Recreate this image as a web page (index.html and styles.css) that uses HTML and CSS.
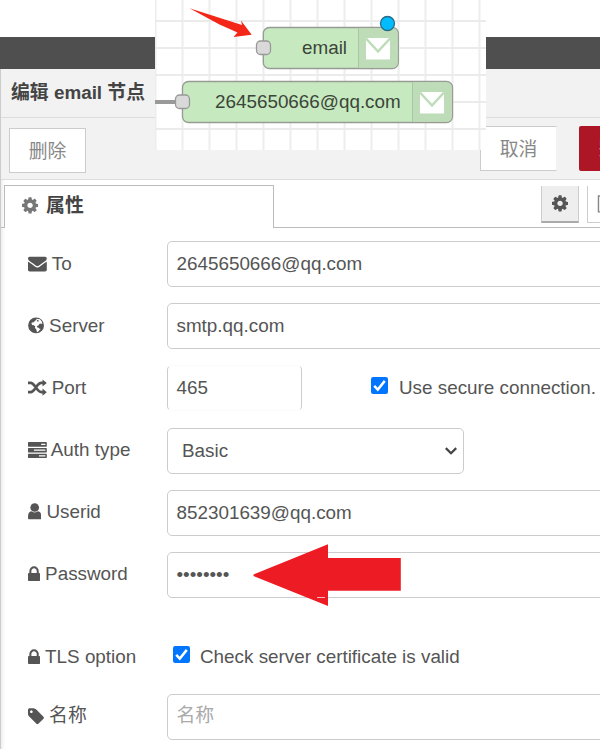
FILE: index.html
```html
<!DOCTYPE html>
<html lang="zh-CN">
<head>
<meta charset="utf-8">
<title>编辑 email 节点</title>
<link rel="stylesheet" href="styles.css">
</head>
<body>
<svg class="defs" width="0" height="0">
  <symbol id="cog" viewBox="0 0 1536 1792"><path d="M1024 896q0-106-75-181t-181-75-181 75-75 181 75 181 181 75 181-75 75-181zm512-109v222q0 12-8 23t-20 13l-185 28q-19 54-39 91 35 50 107 138 10 12 10 25t-9 23q-27 37-99 108t-94 71q-12 0-26-9l-138-108q-44 23-91 38-16 136-29 186-7 28-36 28h-222q-14 0-24.5-8.5t-11.5-21.5l-28-184q-49-16-90-37l-141 107q-10 9-25 9-14 0-25-11-126-114-165-168-7-10-7-23 0-12 8-23 15-21 51-66.5t54-70.5q-27-50-41-99l-183-27q-13-2-21-12.5t-8-23.5v-222q0-12 8-23t19-13l186-28q14-46 39-92-40-57-107-138-10-12-10-24 0-10 9-23 26-36 98.5-107.5t94.5-71.5q13 0 26 10l138 107q44-23 91-38 16-136 29-186 7-28 36-28h222q14 0 24.5 8.5t11.5 21.5l28 184q49 16 90 37l142-107q9-9 24-9 13 0 25 10 129 119 165 170 7 8 7 22 0 12-8 23-15 21-51 66.5t-54 70.5q26 50 41 98l183 28q13 2 21 12.5t8 23.5z"/></symbol>
  <symbol id="lock" viewBox="0 0 1152 1792"><path d="M320 768h512v-192q0-106-75-181t-181-75-181 75-75 181v192zm832 96v576q0 40-28 68t-68 28h-960q-40 0-68-28t-28-68v-576q0-40 28-68t68-28h32v-192q0-184 132-316t316-132 316 132 132 316v192h32q40 0 68 28t28 68z"/></symbol>
  <symbol id="check" viewBox="0 0 17 17"><rect width="17" height="17" rx="2.2" fill="#0075ff"/><path d="M3.2 8.8l3.6 3.7 7-8.6" fill="none" stroke="#fff" stroke-width="2.5"/></symbol>
</svg>

<div class="editor">
  <div class="topbar"></div>
  <div class="tray">
    <header class="tray-header">编辑 email 节点</header>
    <div class="toolbar">
      <div class="btn delete">删除</div>
      <div class="btn cancel">取消</div>
      <div class="btn done">完成</div>
    </div>
    <div class="tabs">
      <div class="tab"><svg class="icon w16"><use href="#cog"/></svg>属性</div>
      <div class="tab-tools">
        <div class="tool active"><svg class="icon w16"><use href="#cog"/></svg></div>
        <div class="tool doc"><svg class="icon w16" viewBox="0 0 16 20"><path d="M1 1h14v17H1zM4 7h8M4 11h8" fill="none" stroke="#888" stroke-width="1.5"/></svg></div>
      </div>
    </div>
    <div class="form">
      <div class="row">
        <div class="label"><svg class="icon w19" viewBox="0 0 1792 1792"><path d="M1792 710v794q0 66-47 113t-113 47h-1472q-66 0-113-47t-47-113v-794q44 49 101 87 362 246 497 345 57 42 92.5 65.5t94.5 48 110 24.5h2q51 0 110-24.5t94.5-48 92.5-65.5q170-123 498-345 57-39 100-87zm0-294q0 79-49 151t-122 123q-376 261-468 325-10 7-42.5 31t-54 38.5-52 32.5-57.5 27-50 9h-2q-23 0-50-9t-57.5-27-52-32.5-54-38.5-42.5-31q-91-64-262-182.5t-205-142.5q-62-42-117-115.5t-55-136.5q0-78 41.5-130t118.5-52h1472q65 0 112.5 47t47.5 113z"/></svg>To</div>
        <div class="field wide">2645650666@qq.com</div>
      </div>
      <div class="row">
        <div class="label"><svg class="icon w16" viewBox="0 0 16 19"><circle cx="8" cy="9.5" r="8"/><path d="M8.600 2.900l3.300.4 2.100 2.600.300 2.300-1.300-.5-1.700.5-.8 1.300-1.600.7.400 1.500 1.800.2 1.400 1.200-1.900 2.400-1.700.8-.5-2.500-1.600-1.800.5-1.500-1.500-1.100-1.600-.3-.9-1.200.6-1.400 1.800-.3 1.200-1.500 1.200-.5z" fill="#fff"/><path d="M9.400 3.800l1.400.7-.5 1.200-1.500-.4zM10 10.200l3.800-.5.400 2-3 1.200z"/></svg>Server</div>
        <div class="field wide">smtp.qq.com</div>
      </div>
      <div class="row">
        <div class="label"><svg class="icon w19" viewBox="0 0 19 19"><path d="M0 5h2.6c4.5 0 6 9.300 11 9.300h2M0 14.300h2.600c4.500 0 6-9.300 11-9.300h2" fill="none" stroke="#555" stroke-width="2.700"/><path d="M14.700 1.400L19 5l-4.300 3.600zM14.700 10.700l4.300 3.600-4.300 3.600z"/></svg>Port</div>
        <div class="field port">465</div>
        <div class="option secure"><svg class="checkbox"><use href="#check"/></svg><span>Use secure connection.</span></div>
      </div>
      <div class="row">
        <div class="label auth"><svg class="icon w19" viewBox="0 0 19 19"><path d="M.5 .9h18q.5 0 .5.5v3.900q0 .5-.5.5H.5q-.5 0-.5-.5V1.400q0-.5.5-.5zM.5 7h18q.5 0 .5.5v3.500q0 .5-.5.5H.5q-.5 0-.5-.5V7.500q0-.5.5-.5zM.5 12.800h18q.5 0 .5.5v3.400q0 .5-.5.5H.5q-.5 0-.5-.5v-3.400q0-.5.5-.5z"/><path d="M13.300 2.700h4.200v1.400h-4.200zM6 8.600h11.500v1.300H6zM11 14.300h6.500v1.300H11z" fill="#fff"/></svg>Auth type</div>
        <div class="field select">Basic<svg class="chevron" viewBox="0 0 12 8"><path d="M.8 1.100l5.200 5.200 5.200-5.200" fill="none" stroke="#444" stroke-width="2.200"/></svg></div>
      </div>
      <div class="row">
        <div class="label"><svg class="icon w13" viewBox="0 0 1280 1792"><path d="M1280 1360q0 100-20 150t-80 50H100q-60 0-80-50T0 1360q0-85 8.500-160.500t31.500-152 58.500-131 94-89 134.500-34.500q131 110 313 110t313-110q76 0 134.500 34.500t94 89 58.500 131 31.500 152 8.500 160.500z"/><circle cx="640" cy="430" r="415"/></svg>Userid</div>
        <div class="field wide">852301639@qq.com</div>
      </div>
      <div class="row">
        <div class="label"><svg class="icon w12"><use href="#lock"/></svg>Password</div>
        <div class="field wide">••••••••</div>
      </div>
      <div class="row tls">
        <div class="label"><svg class="icon w12"><use href="#lock"/></svg>TLS option</div>
        <div class="option"><svg class="checkbox"><use href="#check"/></svg><span>Check server certificate is valid</span></div>
      </div>
      <div class="row">
        <div class="label"><svg class="icon w16" viewBox="0 0 1536 1792"><path d="M448 448q0-53-37.500-90.500t-90.500-37.500-90.500 37.500-37.500 90.500 37.500 90.500 90.500 37.500 90.500-37.500 37.500-90.500zm1067 576q0 53-37 90l-491 492q-39 37-91 37-53 0-90-37l-715-716q-38-37-64.500-101t-26.500-117v-416q0-52 38-90t90-38h416q53 0 117 26.500t102 64.500l715 714q37 39 37 91z"/></svg>名称</div>
        <div class="field wide placeholder">名称</div>
      </div>
    </div>
  </div>

  <svg class="flow" width="331" height="150" viewBox="155 0 331 150">
    <defs>
      <pattern id="grid" x="154.500" y="20" width="27" height="27" patternUnits="userSpaceOnUse"><path d="M0 1h27M1 0v27" stroke="#ebebeb" stroke-width="1.800"/></pattern>
    </defs>
    <rect x="155" width="331" height="150" fill="#fff"/>
    <rect x="155" width="331" height="150" fill="url(#grid)"/>
    <path d="M155 102h27" stroke="#999" stroke-width="4"/>
    <g stroke="#969c94" stroke-width="1.300">
      <rect x="263.300" y="27.500" width="135" height="41" rx="6" fill="#c7e9c0"/>
      <rect x="182.500" y="81.500" width="270" height="41" rx="6" fill="#c7e9c0"/>
    </g>
    <g fill="#bddcb7">
      <path d="M358.500 28.200h33.300q5.800 0 5.800 5.800v28q0 5.800-5.800 5.800h-33.300z"/>
      <path d="M412.500 82.200h33.300q5.800 0 5.800 5.800v28q0 5.800-5.800 5.800h-33.300z"/>
    </g>
    <path d="M358.500 28v40M412.500 82v40" stroke="#a9c6a4"/>
    <g id="mail"><path d="M366 38h24v21.500h-24z" fill="#fff"/><path d="M366 38.500l12 13L390 38.500" fill="none" stroke="#bddcb7" stroke-width="2.500"/></g>
    <use href="#mail" x="54" y="54"/>
    <g fill="#d9d9d9" stroke="#999" stroke-width="1.300">
      <rect x="256.500" y="41" width="14" height="13.500" rx="4"/>
      <rect x="175.500" y="95" width="14" height="13.500" rx="4"/>
    </g>
    <circle cx="387.500" cy="23.500" r="7" fill="#00bcff" stroke="#286b86" stroke-width="1.300"/>
    <text x="302" y="54">email</text>
    <text x="215" y="108">2645650666@qq.com</text>
    <path d="M189.500 8.300L242 25l-1-4.500 10.700 14.200-18.200 2.300 4-4.500-18-8z" fill="#f42618"/>
  </svg>

  <svg class="pointer" width="149" height="64" viewBox="253 543 149 64"><path d="M253.500 574.500L328 544.200V558h72.800v32.800H328V606L253.500 576z" fill="#ed1c24"/><path d="M317 597.500h8" stroke="#f6b9bb"/></svg>
</div>
</body>
</html>
```
FILE: styles.css
```css
* { box-sizing: border-box; }

body {
  margin: 0;
  background: #fff;
  color: #555;
  font: 18.85px/24px "Liberation Sans", "Noto Sans CJK SC", sans-serif;
}

.defs { position: absolute; }

.editor {
  position: relative;
  width: 600px;
  height: 749px;
  padding-top: 37px;
  overflow: hidden;
}

.topbar { height: 32px; background: #4f4f4f; }

.tray {
  height: 680px;
  border-left: 1px solid #ccc;
  background: linear-gradient(90deg, #eee, #fff 4px);
}

.tray-header {
  height: 49px;
  padding: 12px 0 0 10px;
  background: #f2f2f2;
  border-bottom: 1px solid #ddd;
  color: #444;
  font-weight: bold;
}

.toolbar {
  display: flex;
  height: 62px;
  padding: 8px 0 0 8px;
  background: #f2f2f2;
  border-bottom: 1px solid #ddd;
}

.btn {
  flex: none;
  width: 77px;
  height: 45px;
  border: 1px solid #ccc;
  background: #fff;
  color: #888;
  font-family: "Noto Sans CJK SC", sans-serif;
  line-height: 41px;
  text-align: center;
}

.delete { margin-top: 2px; }
.cancel { margin-left: 394px; border-right-color: #f2f2f2; }
.done {
  margin-left: 22px;
  border: 0;
  border-radius: 2px;
  background: #ad1625;
  color: #fff;
}

.tabs {
  display: flex;
  height: 48px;
  padding-top: 5px;
  background: linear-gradient(#bbb, #bbb) 0 47px / 100% 1px no-repeat;
}

.tab {
  display: flex;
  flex: none;
  align-items: center;
  gap: 8px;
  width: 270px;
  height: 43px;
  margin-left: 3px;
  padding: 0 0 3px 17px;
  border: 1px solid #bbb;
  border-bottom: 0;
  background: #fff;
  color: #444;
  font-weight: bold;
}
.tab .icon { fill: #777; }

.tab-tools {
  display: flex;
  flex: none;
  gap: 8px;
  margin: 1px 0 0 267px;
}

.tool {
  display: flex;
  flex: none;
  align-items: center;
  justify-content: center;
  width: 38px;
  height: 37px;
  border: 1px solid #ccc;
  border-top: 0;
}
.tool.active { background: #eee; border-bottom: 2px solid #aaa; }
.tool.doc { justify-content: flex-start; padding-left: 9px; }

.icon {
  flex: none;
  height: 18.8px;
  fill: #555;
}
.w19 { width: 18.8px; }
.w16 { width: 16.1px; }
.w13 { width: 13.4px; }
.w12 { width: 12.1px; }

.form { padding: 13px 0 0 27px; }

.row {
  display: flex;
  height: 46px;
  margin-bottom: 16.2px;
}

.label {
  display: flex;
  flex: none;
  align-items: center;
  gap: 5px;
  width: 139px;
  height: 45px;
  white-space: nowrap;
}
.auth { gap: 4px; }

.field {
  flex: none;
  height: 46px;
  padding: 0 9px 0 8.5px;
  border: 1px solid #ccc;
  border-radius: 5px;
  background: #fff;
  line-height: 44px;
  white-space: nowrap;
}
.wide { width: 440px; }
.port {
  width: 135px;
  border-top-color: #fbfbfb;
  border-bottom-color: #fbfbfb;
}

.select {
  display: flex;
  align-items: center;
  justify-content: space-between;
  width: 297px;
  padding: 0 6px 0 14px;
}
.chevron { width: 12px; height: 8px; }
.placeholder { color: #aaa; line-height: 42px; }

.option {
  display: flex;
  align-items: center;
  gap: 10px;
  height: 45px;
  padding-left: 6px;
  white-space: nowrap;
}
.option.secure { padding-left: 69px; gap: 11px; }
.checkbox {
  width: 17px;
  height: 17px;
  margin-bottom: 5px;
}

.row.tls { margin-top: 37px; height: 43px; margin-bottom: 16px; }

.flow {
  position: absolute;
  left: 155px;
  top: 0;
}
.flow text { fill: #3b4539; }

.pointer {
  position: absolute;
  left: 253px;
  top: 543px;
}
```
